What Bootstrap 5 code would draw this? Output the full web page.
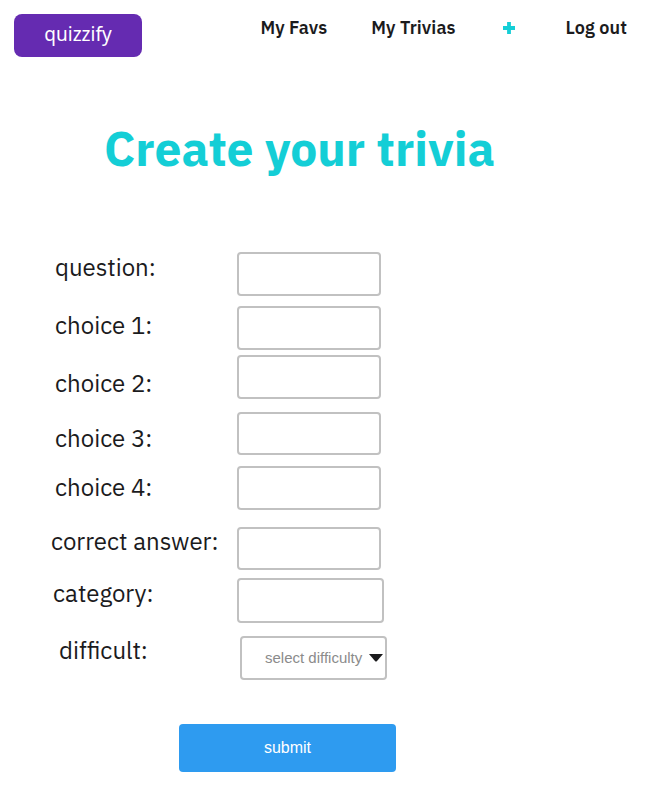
<!DOCTYPE html>
<html lang="en">
<head>
<meta charset="utf-8">
<meta name="viewport" content="width=device-width, initial-scale=1">
<title>quizzify</title>
<link rel="stylesheet" href="https://cdn.jsdelivr.net/npm/bootstrap@5.3.0/dist/css/bootstrap.min.css">
<style>
body { color: #1b1b1d; font-family: "IBM Plex Sans", "Open Sans", "Noto Sans", sans-serif; overflow: hidden; }
.topbar { height: 58px; padding: 14px 23px 0 14px; }
.logo-btn { width: 128px; height: 43px; background: #652bb1; border-radius: 8px; font: 19px/40px "Noto Sans", sans-serif; }
.main-links { font-size: 18px; line-height: 28px; font-weight: 600; letter-spacing: .08px; }
.main-links a { color: #1b1b1d; }
.main-links .trivias { margin-left: 44px; }
.main-links .plus { width: 12px; height: 28px; margin-left: 47px; margin-right: 51px; }
.title { color: #14ced6; font-size: 48px; line-height: 60px; margin: 60px 0 0 104px; }
.trivia-form { margin-top: 74px; padding-left: 55px; }
.q-row label { width: 182px; font-size: 24px; line-height: 30px; font-weight: 400; white-space: nowrap; }
.q-row .form-control { width: 144px; height: 44px; border: 2px solid #c1c1c1; border-radius: 4px; }
.q-row .select-wrap { width: 147px; height: 44px; border: 2px solid #c1c1c1; border-radius: 4px; padding: 0 2px 0 23px; color: #8b8b8b; font: 15px/40px "Liberation Sans", Arial, sans-serif; }
.r2 { margin-top: 10px; } .r2 label { margin-top: 4px; }
.r3 { margin-top: 5px; } .r3 label { margin-top: 13px; }
.r4 { margin-top: 13px; } .r4 label { margin-top: 11px; }
.r5 { margin-top: 10px; } .r5 label { margin-top: 6px; }
.r6 { margin-top: 17px; } .r6 label { margin: -1px 0 0 -4px; width: 186px; }
.r7 { margin-top: 7px; } .r7 label { margin: 0 0 0 -2px; width: 184px; }
.r4 .form-control, .r6 .form-control { height: 43px; margin-bottom: 1px; }
.r7 .form-control { width: 147px; height: 45px; }
.r8 { margin-top: 13px; } .r8 label { margin: -1px 0 0 4px; width: 181px; }
.send { width: 217px; height: 48px; margin: 44px 0 0 179px; background: #2e9bf0; border-radius: 4px; font: 16px/46px "Liberation Sans", Arial, sans-serif; }
</style>
<script src="https://cdn.jsdelivr.net/npm/bootstrap@5.3.0/dist/js/bootstrap.bundle.min.js"></script>
</head>
<body class="bg-white">
<header class="topbar d-flex justify-content-between align-items-start">
  <a class="logo-btn text-white text-center text-decoration-none" href="#">quizzify</a>
  <nav class="main-links d-flex">
    <a class="text-decoration-none" href="#">My Favs</a>
    <a class="text-decoration-none trivias" href="#">My Trivias</a>
    <a class="plus d-flex align-items-center" href="#" aria-label="Add"><svg width="12" height="12" viewBox="0 0 12 12"><path d="M6 0v12M0 6h12" stroke="#14ced6" stroke-width="3.8"/></svg></a>
    <a class="text-decoration-none" href="#">Log out</a>
  </nav>
</header>
<main>
  <h1 class="title fw-bold">Create your trivia</h1>
  <form class="trivia-form">
    <div class="q-row r1 d-flex align-items-start"><label for="q">question:</label><input class="form-control" id="q"></div>
    <div class="q-row r2 d-flex align-items-start"><label for="c1">choice 1:</label><input class="form-control" id="c1"></div>
    <div class="q-row r3 d-flex align-items-start"><label for="c2">choice 2:</label><input class="form-control" id="c2"></div>
    <div class="q-row r4 d-flex align-items-start"><label for="c3">choice 3:</label><input class="form-control" id="c3"></div>
    <div class="q-row r5 d-flex align-items-start"><label for="c4">choice 4:</label><input class="form-control" id="c4"></div>
    <div class="q-row r6 d-flex align-items-start"><label for="ca">correct answer:</label><input class="form-control" id="ca"></div>
    <div class="q-row r7 d-flex align-items-start"><label for="cat">category:</label><input class="form-control" id="cat"></div>
    <div class="q-row r8 d-flex align-items-start"><label>difficult:</label>
      <div class="select-wrap d-flex justify-content-between align-items-center" role="button"><span class="text-nowrap">select difficulty</span><svg width="14" height="8" viewBox="0 0 14 8"><path d="M0 0h14L7.8 7.2q-.8.8-1.6 0z" fill="#1b1b1d"/></svg></div></div>
  </form>
  <button class="send btn border-0 p-0 text-white d-block" type="button">submit</button>
</main>
</body>
</html>
